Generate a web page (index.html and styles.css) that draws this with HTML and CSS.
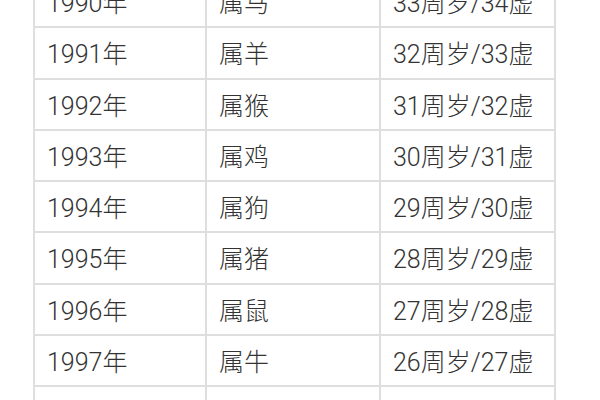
FILE: index.html
```html
<!DOCTYPE html>
<html lang="zh">
<head>
<meta charset="utf-8">
<link rel="stylesheet" href="styles.css">
</head>
<body>
<table class="age-table">
  <tr><td>1990年</td><td>属马</td><td>33周岁/34虚</td></tr>
  <tr><td>1991年</td><td>属羊</td><td>32周岁/33虚</td></tr>
  <tr><td>1992年</td><td>属猴</td><td>31周岁/32虚</td></tr>
  <tr><td>1993年</td><td>属鸡</td><td>30周岁/31虚</td></tr>
  <tr><td>1994年</td><td>属狗</td><td>29周岁/30虚</td></tr>
  <tr><td>1995年</td><td>属猪</td><td>28周岁/29虚</td></tr>
  <tr><td>1996年</td><td>属鼠</td><td>27周岁/28虚</td></tr>
  <tr><td>1997年</td><td>属牛</td><td>26周岁/27虚</td></tr>
  <tr><td>1998年</td><td>属虎</td><td>25周岁/26虚</td></tr>
</table>
</body>
</html>
```
FILE: styles.css
```css
html, body {
  margin: 0;
  padding: 0;
  background: #ffffff;
  overflow: hidden;
}
body {
  width: 600px;
  height: 400px;
}
.age-table {
  border-collapse: collapse;
  margin: -25px 0 0 33px;
  table-layout: fixed;
  width: 521px;
  font-family: Roboto, "Noto Sans CJK SC", sans-serif;
  font-weight: 300;
  font-size: 25px;
  color: #333333;
}
.age-table td {
  border: 2px solid #dedede;
  height: 51.25px;
  padding: 4px 12px 0 12px;
  box-sizing: border-box;
  vertical-align: middle;
  white-space: nowrap;
  line-height: 1;
}
.age-table td:nth-child(1) { width: 172px; }
.age-table td:nth-child(2) { width: 174px; }
.age-table td:nth-child(3) { width: 175px; }
```
